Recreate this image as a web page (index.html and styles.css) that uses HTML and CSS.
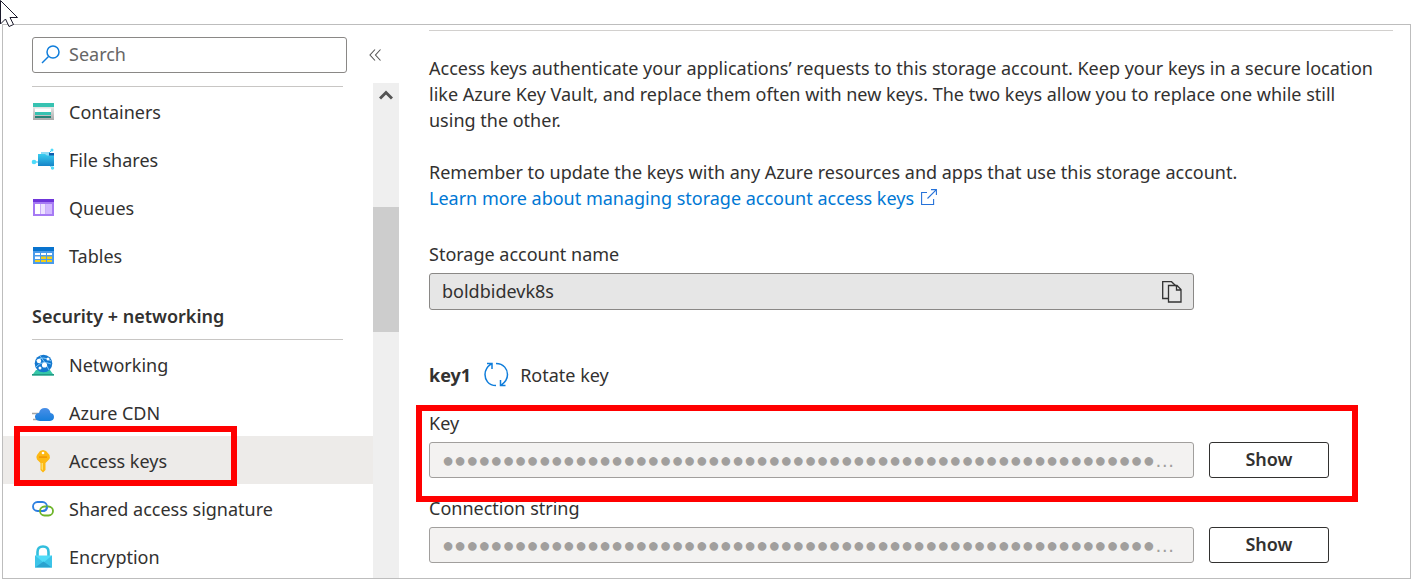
FILE: index.html
```html
<!DOCTYPE html>
<html lang="en">
<head>
<meta charset="utf-8">
<title>Access keys</title>
<link rel="stylesheet" href="styles.css">
</head>
<body>
<svg class="cursor" width="20" height="28" viewBox="0 0 20 28" aria-hidden="true"><path d="M.5 .5V24l5-5 3.500 7.500 4.500-2-3.500-7h7.500z" fill="#fff" stroke="#1b1a2b"/></svg>
<div class="frame">
  <aside class="sidebar">
    <div class="search-row">
      <label class="search">
        <svg width="20" height="20" viewBox="0 0 20 20" fill="none" stroke="#0f7ddb" stroke-width="1.500" aria-hidden="true"><circle cx="12" cy="8" r="6"/><path d="M7.500 12.500L1 19"/></svg>
        <input type="search" placeholder="Search" aria-label="Search">
      </label>
      <button class="collapse" type="button" aria-label="Collapse menu"><svg width="14" height="14" viewBox="0 0 14 14" fill="none" stroke="#555" stroke-width="1.100"><path d="M6 1.500L1 7l5 5.500M11.500 1.500L6.500 7l5 5.500"/></svg></button>
    </div>
    <div class="scroll-area">
      <nav class="menu" aria-label="Storage account">
        <ul class="group">
          <li><a class="item" href="#"><svg class="icon" viewBox="0 0 22 22"><defs><linearGradient id="gray" x2="0" y2="1"><stop stop-color="#e6e6e6"/><stop offset="1" stop-color="#aaa"/></linearGradient></defs><path fill="url(#gray)" d="M1 6h21v13H1z"/><path fill="#37c2b1" d="M1 2h21v4H1zM3 11h16v3H3z"/><path fill="#fff" d="M3 7.500h16V11H3z"/><path fill="#258277" d="M3 15h16v2H3z"/></svg>Containers</a></li>
          <li><a class="item" href="#"><svg class="icon" viewBox="0 0 22 22"><defs><linearGradient id="folder" x2="0" y2="1"><stop stop-color="#38cdf0"/><stop offset="1" stop-color="#1784c8"/></linearGradient></defs><path stroke="#35bdec" d="M3 13h5M17 4l3-3M17 15l3 4"/><path fill="#0f5cad" d="M17 4h5v4h-5z"/><path fill="#8fdcf5" d="M9 3h8v4H9z"/><path fill="url(#folder)" d="M6 5h7l2 1.500h7V17H6z"/><g fill="#4edcfa"><circle cx="2" cy="13" r="2.300"/><circle cx="20" cy="1" r="1.500"/><circle cx="20.500" cy="19" r="1.700"/></g></svg>File shares</a></li>
          <li><a class="item" href="#"><svg class="icon" viewBox="0 0 22 22"><path fill="#a67af4" d="M1 4h21v15H1z"/><path fill="#6f35da" d="M1 2h21v3H1z"/><path fill="#fff" d="M3 7h5v10H3z"/><path fill="#ede2ff" d="M8.500 7h5v10h-5z"/><path fill="#d2b8ff" d="M14 7h6v10h-6z"/></svg>Queues</a></li>
          <li><a class="item" href="#"><svg class="icon" viewBox="0 0 22 22"><path fill="#4b9bea" d="M1 4h21v15H1z"/><path fill="#0873ce" d="M1 2h21v4H1z"/><path fill="#fff" d="M3 8h5v2H3zm6 0h5v2H9zm6 0h5v2h-5zM3 11.500h5V14H3z"/><path fill="#f2cf18" d="M9 11.500h5V14H9zm6 0h5V14h-5zM9 15h5v2H9zm6 0h5v2h-5zM3 15h5v2H3z"/></svg>Tables</a></li>
        </ul>
        <h2 class="heading">Security + networking</h2>
        <ul class="group">
          <li><a class="item" href="#"><svg class="icon" viewBox="0 0 22 22"><path fill="#36c7a8" d="M4 16h14l4 5.500H0z"/><path fill="#239a83" d="M0 20h22v1.500H0z"/><circle cx="11.500" cy="9.500" r="8.800" fill="#1478cf"/><path fill="none" stroke="#82c8f7" d="M4 7q7-6 15 0M4 13q6-7 15-3M8 2q6 7 9 14"/><g fill="#fff"><circle cx="7" cy="7" r="2.200"/><circle cx="12.500" cy="11" r="2.600"/><circle cx="16" cy="5" r="1.500"/><circle cx="8" cy="14" r="1.500"/></g></svg>Networking</a></li>
          <li><a class="item" href="#"><svg class="icon" viewBox="0 0 22 22"><defs><linearGradient id="cloud" x2="0" y2="1"><stop stop-color="#4a8fe8"/><stop offset="1" stop-color="#167edb"/></linearGradient></defs><path stroke="#a5a5a5" stroke-width="1.500" d="M0 11.500h7M3 14.500h5M1 17.500h7"/><path fill="url(#cloud)" d="M8 19q-5-.5-5-4.500Q3.500 11 7 11q1-5 6-5 4.500 0 5.500 5 3.500.5 3.500 4t-4 4z"/></svg>Azure CDN</a></li>
          <li class="marked"><a class="item selected" href="#" aria-current="page"><svg class="icon" viewBox="0 0 22 22"><path fill="#fdb813" d="M11 0l3 1 3.500 4q1 3-.5 4.500L13.500 13v7L11 22.500 8.500 20v-7L5 9.500q-1.500-2 0-4.500L8 1z"/><path fill="#ffe06a" d="M9.500 13h1.500v7.500L9.500 19z"/><path fill="#ed8b00" d="M7 6.500h8v1.200H7z"/><circle cx="11" cy="3" r="1.300" fill="#fff"/></svg>Access keys</a></li>
          <li><a class="item" href="#"><svg class="icon" viewBox="0 0 22 22" fill="none" stroke-width="1.800"><rect x="1" y="4" width="14" height="9" rx="4.500" stroke="#2d7fe0"/><rect x="8" y="8.500" width="13" height="9" rx="4.500" stroke="#6eb52b"/><path stroke="#2d7fe0" d="M10 13h1q4 0 4-4.500"/></svg>Shared access signature</a></li>
          <li><a class="item" href="#"><svg class="icon" viewBox="0 0 22 22"><path fill="none" stroke="#32bedd" stroke-width="2.600" d="M5.500 11V6q0-5.500 5.500-5.500T16.500 6v5"/><path fill="#50dcf8" d="M3 9.500h17v12H3z"/><path fill="#3cc4e8" d="M3 9.500l8.500 7-8.500 5zM20 9.500l-8.500 7 8.500 5z"/><path fill="#2aa3cf" d="M3 21.500l8.500-6 8.500 6z"/></svg>Encryption</a></li>
        </ul>
      </nav>
      <div class="scrollbar" aria-hidden="true">
        <svg width="14" height="10" viewBox="0 0 14 10"><path fill="none" stroke="#555" stroke-width="3" d="M1 8.500l6-6 6 6"/></svg>
        <div class="thumb"></div>
      </div>
    </div>
  </aside>
  <main class="content">
    <p>Access keys authenticate your applications’ requests to this storage account. Keep your keys in a secure location like Azure Key Vault, and replace them often with new keys. The two keys allow you to replace one while still using the other.</p>
    <p>Remember to update the keys with any Azure resources and apps that use this storage account.<br>
      <a class="link" href="#">Learn more about managing storage account access keys <svg width="16" height="16" viewBox="0 0 16 16" fill="none" stroke="#2672d9" stroke-width="1.100" aria-hidden="true"><path d="M6 3.500H.6v12h12V10M10 .6h5.400V6M15.400 .6L6.500 9.500"/></svg></a></p>
    <section class="account">
      <label for="account">Storage account name</label>
      <div class="field account-field">
        <input id="account" type="text" value="boldbidevk8s" readonly>
        <button class="copy" type="button" aria-label="Copy"><svg width="20" height="22" viewBox="0 0 20 22" fill="none" stroke="#333" stroke-width="1.300"><path d="M6 17.500H.7V.7H9.500L14 5"/><path d="M6.500 4.500h8.500l4 4V21H6.500zM14.500 4.500V9H19"/></svg></button>
      </div>
    </section>
    <div class="key-head">
      <h3>key1</h3>
      <button class="rotate" type="button"><svg width="26" height="26" viewBox="0 0 26 26" fill="none" stroke="#0f7ddb" stroke-width="1.500"><path d="M13 23.500C5 23.500 2 17.500 2 12.500 2 8 4.500 4.500 8.500 1.700M4 1.500h5V7M13 1.500c8 0 11.500 6 11.500 11 0 4.500-2.500 8-6.500 10.800M22.500 23.500H17.500V18"/></svg>Rotate key</button>
    </div>
    <section class="secret highlighted">
      <label for="key">Key</label>
      <div class="row">
        <input id="key" class="field masked" type="text" disabled value="●●●●●●●●●●●●●●●●●●●●●●●●●●●●●●●●●●●●●●●●●●●●●●●●●●●●●●●●●●●●●●●●●●●●●●●●●●●●●●●●">
        <button class="show" type="button">Show</button>
      </div>
    </section>
    <section class="secret">
      <label for="connection">Connection string</label>
      <div class="row">
        <input id="connection" class="field masked" type="text" disabled value="●●●●●●●●●●●●●●●●●●●●●●●●●●●●●●●●●●●●●●●●●●●●●●●●●●●●●●●●●●●●●●●●●●●●●●●●●●●●●●●●">
        <button class="show" type="button">Show</button>
      </div>
    </section>
  </main>
</div>
</body>
</html>
```
FILE: styles.css
```css
* { box-sizing: border-box; }
body {
  margin: 0;
  padding: 24px 0 0 2px;
  background: #fff;
  color: #323130;
  font: 18px/26px "Noto Sans", "Open Sans", sans-serif;
}
button, input { font: inherit; color: inherit; }
button { background: none; border: 0; padding: 0; cursor: pointer; }
svg { flex: none; }
p, h2, h3, ul { margin: 0; padding: 0; }
ul { list-style: none; }
.cursor { position: absolute; left: 0; top: 0; z-index: 2; }
.frame {
  display: flex;
  height: calc(100vh - 24px);
  border: 1px solid #bdbdbd;
}
.sidebar { display: flex; flex-direction: column; flex: none; width: 396px; }
.search-row { display: flex; align-items: center; gap: 22px; padding: 12px 0 10px 29px; }
.search {
  display: flex;
  align-items: center;
  gap: 8px;
  width: 315px;
  height: 36px;
  padding: 0 0 2px 8px;
  border: 1px solid #8a8886;
  border-radius: 3px;
}
.search input { flex: 1; min-width: 0; padding: 0; border: 0; outline: 0; background: none; }
.search input::placeholder { color: #666; opacity: 1; }
.collapse { display: flex; }
.scroll-area { display: flex; flex: 1; min-height: 0; }
.menu { flex: 1; padding-top: 3px; }
.menu::before { content: ""; display: block; height: 1px; margin: 0 30px 1px 29px; background: #c8c6c4; }
.item {
  display: flex;
  align-items: center;
  gap: 15px;
  height: 48px;
  padding-left: 29px;
  color: inherit;
  text-decoration: none;
  white-space: nowrap;
}
.heading + .group .item { padding-top: 2px; }
.icon { width: 22px; height: 22px; overflow: visible; }
.selected { background: #edebe9; }
.heading {
  height: 60px;
  margin: 0 30px 0 29px;
  padding-top: 23px;
  border-bottom: 1px solid #c8c6c4;
  font-size: 18px;
  font-weight: 600;
  line-height: 26px;
  white-space: nowrap;
}
.marked, .highlighted { position: relative; }
.marked::after, .highlighted::after {
  content: "";
  position: absolute;
  box-sizing: border-box;
  border: 6px solid #f00;
  pointer-events: none;
}
.marked::after { inset: -10px auto -2px 11px; width: 223px; }
.highlighted::after { inset: -5px auto -24px -13px; width: 942px; }
.scrollbar { width: 26px; background: #efefef; text-align: center; }
.scrollbar svg { display: block; margin: 7px auto 107px; }
.thumb { height: 125px; background: #cdcdcd; }
.content { flex: 1; min-width: 0; padding: 5px 17px 0 30px; }
.content::before { content: ""; display: block; height: 1px; margin-bottom: 24px; background: #d2d0ce; }
.content p { margin-bottom: 26px; padding-right: 16px; }
.content label { display: block; }
.content p + .account { margin-top: 30px; }
.link { color: #0078d4; text-decoration: none; }
.link svg { margin-left: 2px; }
.field {
  width: 765px;
  height: 36px;
  border: 1px solid #a19f9d;
  border-radius: 3px;
  background: #f3f2f1;
}
.account-field {
  display: flex;
  align-items: center;
  height: 37px;
  margin-top: 6px;
  padding: 0 11px 0 12px;
  border-color: #8a8886;
  background: #e6e6e6;
}
.account-field input { flex: 1; padding: 0 0 2px; border: 0; outline: 0; background: none; }
.copy { display: flex; }
.key-head { display: flex; align-items: center; height: 26px; margin: 52px 0 22px; gap: 12px; }
.key-head h3 { font-size: 18px; font-weight: 700; }
.rotate { display: flex; align-items: center; gap: 11px; }
.row { display: flex; gap: 15px; margin-top: 6px; }
.secret + .secret { margin-top: 17px; }
.masked {
  padding: 0 11px 0 12px;
  color: #a19f9d;
  font: 20px "Liberation Sans", sans-serif;
  text-overflow: ellipsis;
}
.show {
  width: 120px;
  height: 36px;
  padding-bottom: 2px;
  border: 1px solid #323130;
  border-radius: 3px;
  font-weight: 600;
}
```
